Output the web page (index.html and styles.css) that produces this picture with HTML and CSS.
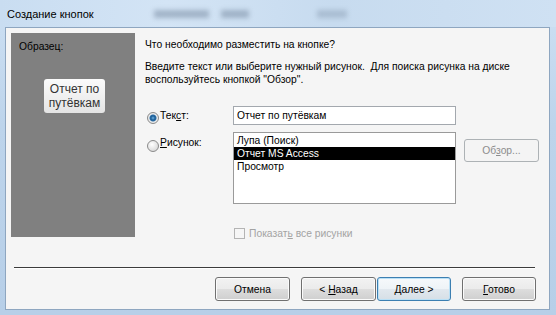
FILE: index.html
```html
<!DOCTYPE html>
<html lang="ru">
<head>
    <meta charset="UTF-8">
    <title>Создание кнопок</title>
    <link rel="stylesheet" href="styles.css">
</head>
<body>

<div class="window">
    <div class="titlebar">
        <span class="title">Создание кнопок</span>
        <span class="haze haze-1"></span>
        <span class="haze haze-2"></span>
        <span class="haze haze-3"></span>
    </div>

    <div class="client">
        <div class="main">
            <div class="sample-panel">
                <div class="sample-label">Образец:</div>
                <div class="sample-button">Отчет по<br>путёвкам</div>
            </div>

            <div class="content">
                <p class="question">Что необходимо разместить на кнопке?</p>
                <p class="hint">Введите текст или выберите нужный рисунок.&nbsp; Для поиска рисунка на диске<br>воспользуйтесь кнопкой "Обзор".</p>

                <div class="option option-text">
                    <label class="choice"><span class="radio checked"></span><span>Тек<u>с</u>т:</span></label>
                    <div class="textbox">Отчет по путёвкам</div>
                </div>

                <div class="option option-picture">
                    <label class="choice"><span class="radio"></span><span><u>Р</u>исунок:</span></label>
                    <ul class="listbox">
                        <li>Лупа (Поиск)</li>
                        <li class="selected">Отчет MS Access</li>
                        <li>Просмотр</li>
                    </ul>
                    <button class="btn btn-browse" disabled>Об<u>з</u>ор...</button>
                </div>

                <label class="show-all"><span class="checkbox"></span><span>Показат<u>ь</u> все рисунки</span></label>
            </div>
        </div>

        <div class="separator"></div>

        <div class="buttons">
            <button class="btn btn-cancel">Отмена</button>
            <button class="btn btn-back">&lt; <u>Н</u>азад</button>
            <button class="btn btn-next"><u>Д</u>алее &gt;</button>
            <button class="btn btn-finish"><u>Г</u>отово</button>
        </div>
    </div>
</div>

</body>
</html>
```

FILE: styles.css
```css
body {
    margin: 0;
    font-family: "Liberation Sans", Arial, sans-serif;
    font-size: 10.3px;
    color: #000;
}
.window {
    width: 556px;
    height: 315px;
    background: linear-gradient(to bottom, #cde0f3, #bdd4eb 40%, #b7cfe8);
    overflow: hidden;
}
.titlebar {
    height: 27px;
    display: flex;
    align-items: center;
    padding-left: 7px;
    background: linear-gradient(to right, #c9ddf1, #d3e4f5 30%, #c7dbef 60%, #cfe1f3);
}
.title {
    font-size: 11px;
    color: #000;
}
.haze {
    height: 8px;
    background: #71849b;
    filter: blur(2.5px);
    opacity: 0.5;
}
.haze-1 { width: 55px; margin-left: 60px; }
.haze-2 { width: 28px; margin-left: 12px; }
.haze-3 { width: 30px; margin-left: 68px; opacity: 0.35; }

.client {
    box-sizing: border-box;
    height: 283px;
    margin: 0 6px 0 5px;
    background: #f5f5f5;
    border: 1px solid #8ea6c0;
}
.main {
    display: flex;
    align-items: flex-start;
}
.sample-panel {
    box-sizing: border-box;
    width: 124px;
    height: 204px;
    margin: 5px 0 0 5px;
    padding: 7px 0 0 8px;
    background: #808080;
}
.sample-label {
    line-height: 13px;
}
.sample-button {
    box-sizing: border-box;
    width: 61px;
    height: 34px;
    margin: 26px 0 0 25px;
    padding-top: 3px;
    border-radius: 3px;
    background: linear-gradient(to bottom, #fbfbfb, #f0f0f0 50%, #e4e4e4);
    color: #333;
    font-size: 12px;
    line-height: 14px;
    text-align: center;
}
.content {
    margin-left: 10px;
    padding-top: 10px;
}
.question, .hint {
    margin: 0;
    line-height: 13px;
}
.hint {
    margin-top: 9px;
}
.option {
    display: flex;
    align-items: flex-start;
}
.option-text {
    margin-top: 20px;
    height: 19px;
}
.option-picture {
    margin-top: 7px;
    height: 72px;
}
.choice {
    display: flex;
    align-items: flex-start;
    width: 86px;
    padding-left: 2px;
    line-height: 13px;
}
.option-text .choice { padding-top: 3px; }
.option-picture .choice { padding-top: 4px; }
.radio {
    box-sizing: border-box;
    width: 12px;
    height: 12px;
    margin-right: 1px;
    border: 1px solid #8a8a8a;
    border-radius: 50%;
    background: radial-gradient(circle at 40% 35%, #ffffff, #e2e2e2 60%, #cfcfcf);
}
.option-text .radio { margin-top: 3px; }
.option-picture .radio { margin-top: 4px; }
.radio.checked {
    background: radial-gradient(circle, #6fb6e8 0, #1f5f96 2px, #2a6ca4 3px, #f0f0f0 4px, #dcdcdc 6px);
}
.textbox {
    box-sizing: border-box;
    width: 223px;
    height: 19px;
    padding-left: 3px;
    border: 1px solid #a3a8ae;
    background: #fff;
    line-height: 17px;
}
.listbox {
    box-sizing: border-box;
    width: 223px;
    height: 72px;
    margin: 0;
    padding: 1px 0 0;
    list-style: none;
    border: 1px solid #9a9a9a;
    background: #fff;
}
.listbox li {
    height: 13px;
    padding-left: 3px;
    line-height: 13px;
}
.listbox li.selected {
    background: #000;
    color: #fff;
}
.show-all {
    display: flex;
    align-items: center;
    margin: 24px 0 0 89px;
    height: 11px;
    color: #a3a3a3;
}
.checkbox {
    box-sizing: border-box;
    width: 11px;
    height: 11px;
    margin-right: 4px;
    border: 1px solid #b4b4b4;
    background: #f6f6f6;
}
.separator {
    margin: 28px 0 0 8px;
    width: 521px;
    height: 1px;
    background: #3c3c3c;
    box-shadow: 0 1px 0 #ffffff;
}
.buttons {
    display: flex;
    margin: 9px 0 0 209px;
}
.btn {
    box-sizing: border-box;
    width: 75px;
    height: 24px;
    padding: 0;
    border: 1px solid #707070;
    border-radius: 3px;
    background: linear-gradient(to bottom, #f2f2f2 0%, #ebebeb 50%, #dddddd 51%, #cfcfcf 100%);
    box-shadow: inset 0 0 0 1px #fbfbfb;
    font-family: "Liberation Sans", Arial, sans-serif;
    font-size: 10.3px;
    color: #000;
}
.btn-back { margin-left: 11px; }
.btn-next {
    width: 74px;
    margin-left: 1px;
    border-color: #3c7fb1;
    background: linear-gradient(to bottom, #f6f9fb 0%, #eef3f7 50%, #e1e8ee 51%, #d6dfe6 100%);
    box-shadow: inset 0 0 0 1px #b9e0f6;
}
.btn-finish {
    width: 74px;
    margin-left: 11px;
}
.btn-browse {
    margin: 7px 0 0 8px;
    height: 23px;
    border-color: #adb2b5;
    background: #f4f4f4;
    box-shadow: none;
    color: #8d8d8d;
}
```
